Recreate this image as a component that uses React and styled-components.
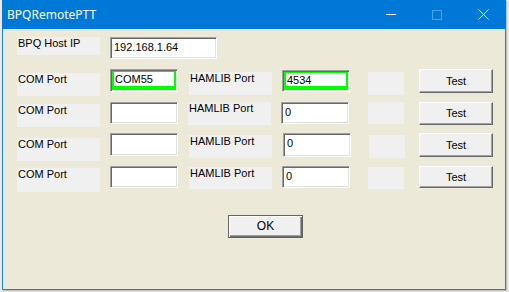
import React from "react";
import styled, { createGlobalStyle } from "styled-components";

const Global = createGlobalStyle`
  html, body { margin: 0; padding: 0; background: #e9e9e9; }
  body { width: 509px; height: 292px; overflow: hidden; }
`;

const Screen = styled.div`
  display: flex;
  padding-left: 2px;
`;

const Window = styled.div`
  width: 504px;
  height: 290px;
  display: flex;
  flex-direction: column;
  box-shadow: 1px 1px 1px rgba(0, 0, 0, 0.18);
`;

const TitleBar = styled.div`
  height: 29px;
  flex: none;
  background: #0078d7;
  display: flex;
  align-items: stretch;
`;

const Title = styled.div`
  flex: 1;
  padding-left: 5px;
  display: flex;
  align-items: center;
  color: #ffffff;
  font-family: "Noto Sans", "Open Sans", sans-serif;
  font-size: 12px;
  padding-bottom: 1px;
`;

const CaptionButton = styled.div`
  width: 46px;
  display: flex;
  align-items: center;
  justify-content: center;
`;

const Body = styled.div`
  flex: 1;
  background: #ece9d8;
  border: 1px solid #1883d7;
  border-top: none;
  padding: 8px 0 0 14px;
  display: flex;
  flex-direction: column;
  font-family: "Liberation Sans", Arial, sans-serif;
  font-size: 11px;
  color: #000;
`;

const Row = styled.div`
  display: grid;
  grid-template-columns: 93px 79px 93px 86px 51px 74px;
  height: ${(p) => p.$h}px;
  align-items: start;
`;

const Cell = styled.div`
  margin-top: ${(p) => p.$dy || 0}px;
  margin-left: ${(p) => p.$dx || 0}px;
`;

const Label = styled(Cell)`
  width: 83px;
  height: ${(p) => p.$h}px;
  background: #f0f0f0;
  padding-left: 1px;
  line-height: 13px;
  box-sizing: border-box;
  white-space: nowrap;
`;

const Blank = styled(Cell)`
  width: 36px;
  height: ${(p) => p.$h}px;
  background: #f0f0f0;
`;

const Field = styled(Cell)`
  box-sizing: border-box;
  width: ${(p) => p.$w || 68}px;
  height: ${(p) => p.$h || 22}px;
  border-top: 1px solid #a0a0a0;
  border-left: 1px solid #a0a0a0;
  border-bottom: 1px solid #ffffff;
  border-right: 1px solid #ffffff;
  box-shadow: inset 1px 1px 0 #696969, inset -1px -1px 0 #e3e3e3;
  background: #ffffff;
  padding: 3px 0 0 3px;
  line-height: 13px;
  white-space: nowrap;
`;

const ActiveField = styled(Field)`
  padding: 1px 1px 1px 1px;
  display: flex;
`;

const GreenBox = styled.div`
  flex: 1;
  border-style: solid;
  border-color: #00ff00;
  border-width: 1px 2px 4px 2px;
  background: #ffffff;
  padding: 1px 0 0 1px;
  line-height: 13px;
`;

const Button = styled(Cell)`
  box-sizing: border-box;
  width: ${(p) => p.$w || 74}px;
  height: ${(p) => p.$h}px;
  background: #f0f0f0;
  border-top: 1px solid #ffffff;
  border-left: 1px solid #ffffff;
  border-bottom: 1px solid #696969;
  border-right: 1px solid #696969;
  box-shadow: inset -1px -1px 0 #a0a0a0;
  display: flex;
  align-items: center;
  justify-content: center;
  padding-bottom: 1px;
`;

const DefaultButton = styled(Button)`
  border: 1px solid #646464;
  box-shadow: inset 1px 1px 0 #ffffff, inset -1px -1px 0 #696969,
    inset -2px -2px 0 #a0a0a0;
  font-size: 12px;
`;

const Footer = styled.div`
  display: flex;
  padding: 23px 0 0 211px;
`;

const rows = [
  {
    h: 33,
    com: { dy: 4, h: 23 },
    comIn: { dy: 0, h: 23, value: "COM55", active: true },
    ham: { dy: 3, h: 23 },
    hamIn: { dy: 1, h: 22, value: "4534", active: true },
    blank: { dy: 3, h: 23 },
    test: { dy: 0, h: 24 },
  },
  {
    h: 31,
    com: { dy: 2, h: 23 },
    comIn: { dy: 0, h: 22, value: "" },
    ham: { dy: 0, h: 23, dx: -1 },
    hamIn: { dy: 0, h: 22, dx: -1, value: "0" },
    blank: { dy: 0, h: 22 },
    test: { dy: 0, h: 23 },
  },
  {
    h: 33,
    com: { dy: 5, h: 23 },
    comIn: { dy: 0, h: 23, value: "" },
    ham: { dy: 2, h: 23 },
    hamIn: { dy: 0, h: 24, dx: 1, value: "0" },
    blank: { dy: 2, h: 23, dx: 1 },
    test: { dy: 0, h: 24 },
  },
  {
    h: 26,
    com: { dy: 2, h: 24 },
    comIn: { dy: 0, h: 22, value: "" },
    ham: { dy: 1, h: 22 },
    hamIn: { dy: 0, h: 22, value: "0" },
    blank: { dy: 1, h: 22 },
    test: { dy: 0, h: 22 },
  },
];

function Input({ spec }) {
  if (spec.active) {
    return (
      <ActiveField $dy={spec.dy} $dx={spec.dx} $h={spec.h}>
        <GreenBox>{spec.value}</GreenBox>
      </ActiveField>
    );
  }
  return (
    <Field $dy={spec.dy} $dx={spec.dx} $h={spec.h}>
      {spec.value}
    </Field>
  );
}

export default function App() {
  return (
    <>
      <Global />
      <Screen>
        <Window>
          <TitleBar>
            <Title>BPQRemotePTT</Title>
            <CaptionButton>
              <svg width="10" height="10" viewBox="0 0 10 10">
                <rect x="0" y="4" width="10" height="1" fill="#ffffff" />
              </svg>
            </CaptionButton>
            <CaptionButton>
              <svg width="10" height="10" viewBox="0 0 10 10">
                <rect x="0.5" y="0.5" width="9" height="9" fill="none" stroke="#4da1e6" strokeWidth="1" />
              </svg>
            </CaptionButton>
            <CaptionButton>
              <svg width="11" height="11" viewBox="0 0 11 11">
                <path d="M0.5 0.5 L10.5 10.5 M10.5 0.5 L0.5 10.5" stroke="#ffffff" strokeWidth="1" />
              </svg>
            </CaptionButton>
          </TitleBar>
          <Body>
            <Row $h={32}>
              <Label $h={18}>BPQ Host IP</Label>
              <Field $w={107} $h={22}>192.168.1.64</Field>
            </Row>
            {rows.map((r, i) => (
              <Row key={i} $h={r.h}>
                <Label $dy={r.com.dy} $h={r.com.h}>COM Port</Label>
                <Input spec={r.comIn} />
                <Label $dy={r.ham.dy} $dx={r.ham.dx} $h={r.ham.h}>HAMLIB Port</Label>
                <Input spec={r.hamIn} />
                <Blank $dy={r.blank.dy} $dx={r.blank.dx} $h={r.blank.h} />
                <Button $dy={r.test.dy} $h={r.test.h}>Test</Button>
              </Row>
            ))}
            <Footer>
              <DefaultButton $w={75} $h={23}>OK</DefaultButton>
            </Footer>
          </Body>
        </Window>
      </Screen>
    </>
  );
}
